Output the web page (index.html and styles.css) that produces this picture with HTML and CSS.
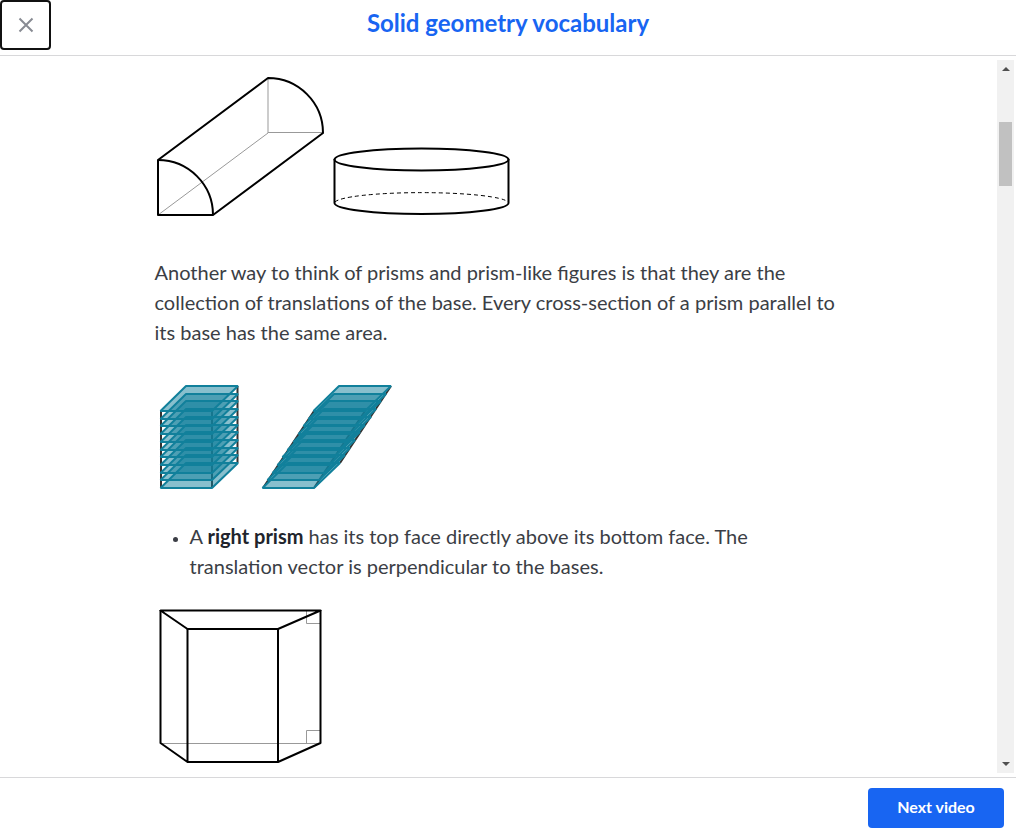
FILE: index.html
```html
<!DOCTYPE html>
<html lang="en">
<head>
  <meta charset="UTF-8" />
  <meta name="viewport" content="width=device-width, initial-scale=1.0"/>
  <title>Solid geometry vocabulary</title>
  <link rel="stylesheet" href="styles.css">
</head>
<body>
  <header class="topbar">
    <button class="close" type="button" aria-label="Close">
      <svg width="16" height="16" viewBox="0 0 16 16"><path d="M1.500 1.500l13 13M14.500 1.500l-13 13"/></svg>
    </button>
    <h1>Solid geometry vocabulary</h1>
  </header>

  <main class="reader">
    <div class="scroll-area">
      <article class="article">
        <div class="figures">
          <!-- quarter-cylinder prism -->
          <svg class="solid" width="172" height="148" viewBox="0 0 172 148">
            <path class="hidden-edge" d="M3 143L113 61V6M113 60.500H168"/>
            <path d="M3 143V88L113 6A55 55 0 0 1 168 61L58 143Z"/>
            <path d="M3 88A55 55 0 0 1 58 143"/>
          </svg>
          <!-- cylinder -->
          <svg class="solid" width="188" height="148" viewBox="0 0 188 148">
            <path class="dashed" d="M8 130A87 10.500 0 0 1 181 130"/>
            <ellipse cx="94.500" cy="87.500" rx="87" ry="11"/>
            <path d="M7.500 87V131A87 11 0 0 0 181.500 131V87"/>
          </svg>
        </div>

        <p>Another way to think of prisms and prism-like figures is that they are the collection of translations of the base. Every cross-section of a prism parallel to its base has the same area.</p>

        <div class="figures">
          <svg class="slices" width="92" height="112" viewBox="0 0 92 112">
            <defs><path id="slice" d="M5.500 31L31 6H83L57 31Z"/></defs>
            <path class="edge" d="M6 31V108M57 31V108M82.500 6V83"/>
            <use href="#slice" y="77"/>
            <use href="#slice" y="69"/>
            <use href="#slice" y="62"/>
            <use href="#slice" y="54"/>
            <use href="#slice" y="46"/>
            <use href="#slice" y="39"/>
            <use href="#slice" y="31"/>
            <use href="#slice" y="23"/>
            <use href="#slice" y="15"/>
            <use href="#slice" y="8"/>
            <use href="#slice"/>
          </svg>
          <svg class="slices" width="160" height="112" viewBox="0 0 160 112">
            <path class="edge" d="M67 31L16 108M118 31L67 108M144 6L93 83"/>
            <use href="#slice" x="10" y="77"/>
            <use href="#slice" x="15" y="69"/>
            <use href="#slice" x="20" y="62"/>
            <use href="#slice" x="25" y="54"/>
            <use href="#slice" x="30" y="46"/>
            <use href="#slice" x="35" y="39"/>
            <use href="#slice" x="41" y="31"/>
            <use href="#slice" x="46" y="23"/>
            <use href="#slice" x="51" y="15"/>
            <use href="#slice" x="56" y="8"/>
            <use href="#slice" x="61"/>
          </svg>
        </div>

        <ul>
          <li>A <strong>right prism</strong> has its top face directly above its bottom face. The translation vector is perpendicular to the bases.</li>
        </ul>

        <div class="figures">
          <!-- right trapezoidal prism -->
          <svg class="solid" width="172" height="168" viewBox="0 0 172 168">
            <path class="hidden-edge" d="M6 139.500H166M151.500 7V19.500H165M151.500 139V126.500H165"/>
            <path d="M5.500 6.500H165.500L123 25H32.500Z"/>
            <path d="M5.500 6V139L32.500 158H123L165.500 139V6M32.500 25V158M123 25V158"/>
          </svg>
        </div>
      </article>
    </div>
    <div class="scrollbar" aria-hidden="true">
      <span class="arrow up"></span>
      <span class="thumb"></span>
      <span class="arrow down"></span>
    </div>
  </main>

  <footer class="bottombar">
    <button class="next" type="button">Next video</button>
  </footer>
</body>
</html>
```
FILE: styles.css
```css
* {
  box-sizing: border-box;
}
body {
  margin: 0;
  height: 100vh;
  display: flex;
  flex-direction: column;
  font-family: Lato, sans-serif;
  color: #3b3e45;
  background: white;
}
.topbar {
  display: grid;
  grid-template-columns: 51px 1fr 51px;
  align-items: center;
  height: 56px;
  padding-bottom: 5px;
  border-bottom: 1px solid #d8d8da;
}
.topbar h1 {
  margin: 0;
  padding-bottom: 4px;
  font-size: 24px;
  line-height: 28px;
  text-align: center;
  color: #1865f2;
}
.close {
  width: 51px;
  height: 50px;
  padding: 0;
  display: flex;
  align-items: center;
  justify-content: center;
  background: white;
  border: 2px solid #111;
  border-radius: 4px;
}
.close svg {
  fill: none;
  stroke: #888b93;
  stroke-width: 2;
}
.reader {
  flex: 1;
  min-height: 0;
  display: flex;
}
.scroll-area {
  flex: 1;
  overflow: hidden;
}
.article {
  max-width: 688px;
  margin: 0 auto;
  padding-top: 16px;
  font-size: 20px;
  line-height: 30px;
}
.article p {
  margin: 37px 0 33px;
}
.article ul {
  margin: 29px 0 23px;
  padding-left: 35px;
}
.article ul li::marker {
  font-size: 16px;
}
.article strong {
  color: #21242c;
}
.figures {
  display: flex;
}
.solid {
  fill: none;
  stroke: black;
  stroke-width: 2;
  stroke-linejoin: round;
}
.solid .hidden-edge {
  stroke: #999;
  stroke-width: 1;
}
.solid .dashed {
  stroke-width: 1;
  stroke-dasharray: 4 3;
}
.slices {
  fill: rgba(17, 128, 155, 0.5);
  stroke: #11809b;
  stroke-width: 2;
  stroke-linejoin: bevel;
}
.slices .edge {
  fill: none;
  stroke: #333;
}
.scrollbar {
  width: 17px;
  margin: 4px 2px 4px 0;
  padding: 6px 1px;
  display: flex;
  flex-direction: column;
  align-items: center;
  background: #f1f1f1;
}
.thumb {
  width: 13px;
  height: 64px;
  margin-top: 51px;
  background: #c1c1c1;
}
.arrow {
  border: 4px solid transparent;
}
.arrow.up {
  height: 5px;
  border-top: 0;
  border-bottom-color: #505050;
}
.arrow.down {
  height: 5px;
  margin-top: auto;
  border-bottom: 0;
  border-top-color: #505050;
}
.bottombar {
  display: flex;
  justify-content: flex-end;
  height: 60px;
  padding: 10px 12px;
  border-top: 1px solid #d8d8da;
}
.next {
  width: 136px;
  height: 40px;
  padding: 0 0 4px;
  font: bold 16px Lato, sans-serif;
  color: white;
  background: #1865f2;
  border: none;
  border-radius: 4px;
  cursor: pointer;
}
```
